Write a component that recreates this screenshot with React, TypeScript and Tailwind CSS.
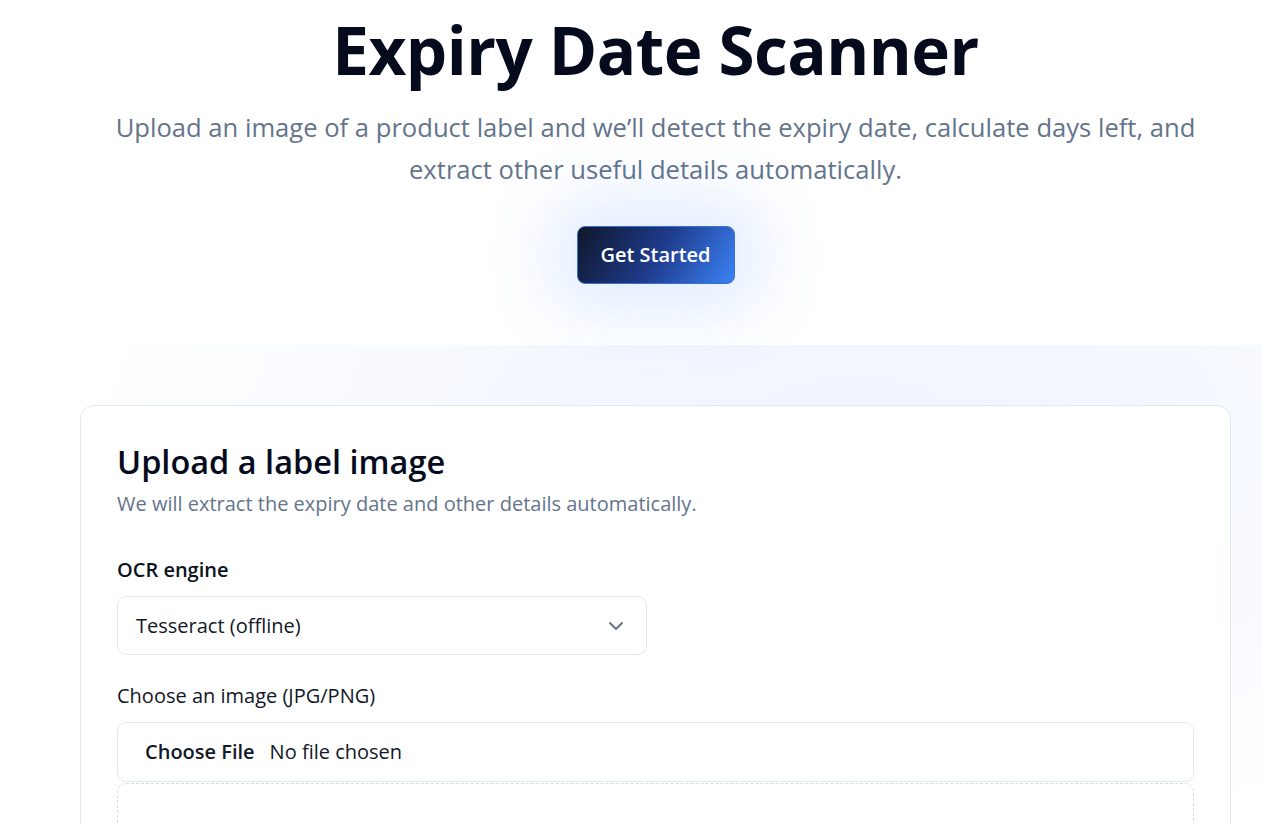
import React from "react";

export default function App() {
  return (
    <div className="w-full overflow-hidden">
      <div className="w-[1311px] min-h-screen bg-white text-[#0b1220]" style={{ fontFamily: '"Open Sans", "Noto Sans", sans-serif' }}>
        <section className="flex flex-col items-center pt-[2px] h-[345px]">
          <h1 className="text-[65.5px] font-bold leading-[96px] tracking-[-0.5px] text-[#050b1d]">Expiry Date Scanner</h1>
          <p className="mt-[9px] text-center text-[25.6px] leading-[42px] text-[#64748b] w-[1100px]">
            Upload an image of a product label and we’ll detect the expiry date, calculate days left, and extract other useful details automatically.
          </p>
          <button className="mt-[35px] h-[58px] w-[158px] rounded-[8px] text-white text-[20px] font-semibold bg-[linear-gradient(120deg,#0f172a_0%,#1e3a8a_50%,#3b82f6_100%)] shadow-[0_0_70px_24px_rgba(59,130,246,0.16)] border border-[#3b6fd0]">
            Get Started
          </button>
        </section>
        <section className="h-[479px] pt-[60px] px-[80px] bg-[radial-gradient(ellipse_60%_90%_at_65%_20%,#eef4ff_0%,#f5f8ff_45%,#ffffff_100%)]">
          <div className="bg-white border border-[#e2e8f0] rounded-[14px] px-[36px] pt-[34px] h-[500px]">
            <h2 className="text-[32.5px] font-semibold leading-[44px] text-[#050b1d]">Upload a label image</h2>
            <p className="text-[20px] leading-[28px] text-[#64748b] mt-[6px]">We will extract the expiry date and other details automatically.</p>
            <label className="block mt-[38px] text-[20px] font-semibold leading-[28px] text-[#0b1220]">OCR engine</label>
            <div className="mt-[12px] w-[530px] h-[59px] rounded-[9px] border border-[#e2e8f0] flex items-center justify-between pl-[18px] pr-[22px]">
              <span className="text-[20px] text-[#111827]">Tesseract (offline)</span>
              <svg width="16" height="10" viewBox="0 0 16 10" fill="none" stroke="#6b7280" strokeWidth="2" strokeLinecap="round" strokeLinejoin="round"><path d="M2 2l6 6 6-6" /></svg>
            </div>
            <label className="block mt-[27px] text-[20px] leading-[28px] text-[#111827]">Choose an image (JPG/PNG)</label>
            <div className="mt-[12px] h-[60px] rounded-[9px] border border-[#e2e8f0] flex items-center pl-[27px]">
              <span className="text-[20px] font-semibold text-[#111827]">Choose File</span>
              <span className="ml-[15px] text-[20px] text-[#111827]">No file chosen</span>
            </div>
            <div className="mt-[1px] h-[120px] rounded-[9px] border border-dashed border-[#d6dde8]"></div>
          </div>
        </section>
      </div>
    </div>
  );
}
